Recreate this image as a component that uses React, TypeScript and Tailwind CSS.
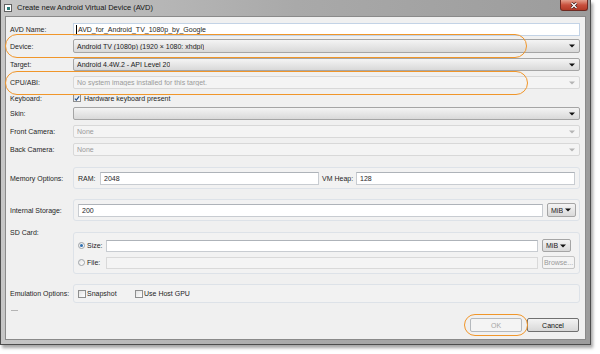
import type { ReactNode } from "react";

function Arrow({ disabled }: { disabled?: boolean }) {
	return (
		<svg width="6" height="4" viewBox="0 0 6 4" className="shrink-0">
			<path d="M0 0.5h6L3 3.5z" fill={disabled ? "#b4b4b4" : "#111"} />
		</svg>
	);
}

function Combo({
	text,
	disabled,
	className = "",
}: {
	text?: string;
	disabled?: boolean;
	className?: string;
}) {
	return (
		<div
			className={`flex items-center justify-between rounded-[2px] border pl-[3px] pr-[4px] ${
				disabled
					? "border-[#d8d8d8] bg-[#f4f4f4] text-[#9a9a9a]"
					: "border-[#a5a5a5] bg-gradient-to-b from-[#f4f4f4] to-[#d9d9d9] text-[#1a1a1a]"
			} ${className}`}
		>
			<span className="truncate">{text}</span>
			<Arrow disabled={disabled} />
		</div>
	);
}

function Input({
	value,
	disabled,
	className = "",
}: {
	value?: string;
	disabled?: boolean;
	className?: string;
}) {
	return (
		<div
			className={`flex items-center border pl-[3px] ${
				disabled
					? "border-[#d9d9d9] bg-[#f4f4f4]"
					: "border-[#c8ccd1] border-t-[#aeb3b9] bg-white"
			} ${className}`}
		>
			{value}
		</div>
	);
}

function Check({ checked }: { checked?: boolean }) {
	return (
		<span className="flex h-[8px] w-[8px] shrink-0 items-center justify-center border border-[#8e8f8f] bg-gradient-to-br from-[#e2e2e2] to-white">
			{checked ? (
				<svg width="7" height="7" viewBox="0 0 7 7">
					<path d="M1 3.6l1.7 1.8L6 1" stroke="#21508f" strokeWidth="1.4" fill="none" />
				</svg>
			) : null}
		</span>
	);
}

function Radio({ checked }: { checked?: boolean }) {
	return (
		<span className="flex h-[7px] w-[7px] shrink-0 items-center justify-center rounded-full border border-[#9ea3a8] bg-gradient-to-br from-[#e6e6e6] to-white">
			{checked ? <span className="h-[3px] w-[3px] rounded-full bg-[#2f6fb0]" /> : null}
		</span>
	);
}

function Row({
	label,
	className = "",
	children,
}: {
	label: string;
	className?: string;
	children: ReactNode;
}) {
	return (
		<div className={`grid grid-cols-[63px_1fr] items-center ${className}`}>
			<span>{label}</span>
			{children}
		</div>
	);
}

function Group({ className = "", children }: { className?: string; children: ReactNode }) {
	return (
		<div className={`rounded-[3px] border border-[#dde2e8] bg-[#f2f2f2] ${className}`}>
			{children}
		</div>
	);
}

export default function App() {
	return (
		<div className="h-[354px] w-[600px] bg-white font-['Liberation_Sans',Arial,sans-serif] text-[7px] leading-none text-[#1e1e1e]">
			<div className="relative flex h-[345px] w-[591px] flex-col border-x border-b border-[#4d4d4d] bg-gradient-to-r from-[#c6c6c6] via-[#a9a9a9] to-[#9c9c9c] shadow-[2px_3px_3px_rgba(0,0,0,0.35)]">
				<div className="flex h-[16px] items-start justify-between">
					<div className="flex items-center gap-[5px] pl-[3px] pt-[4px]">
						<span className="flex h-[8px] w-[8px] items-center justify-center border border-[#606060] bg-white">
							<span className="h-[3px] w-[3px] bg-[#2e7d7a]" />
						</span>
						<span className="text-[7.5px] text-[#151515]">Create new Android Virtual Device (AVD)</span>
					</div>
					<div className="mr-[2px] flex h-[11px] w-[28px] items-center justify-center rounded-b-[3px] border border-t-0 border-[#6e2a22] bg-gradient-to-b from-[#e3a08e] via-[#c8503d] to-[#b23a26]">
						<svg width="8" height="7" viewBox="0 0 8 7">
							<path d="M1.5 1l5 5M6.5 1l-5 5" stroke="#3a1510" strokeWidth="2.6" />
							<path d="M1.5 1l5 5M6.5 1l-5 5" stroke="#fff" strokeWidth="1.4" />
						</svg>
					</div>
				</div>

				<div className="relative mx-[4px] mb-[4px] flex flex-1 flex-col border border-[#8a8a8a] bg-[#f0f0f0] pl-[4px] pr-[5px] pt-[6px]">
					<Row label="AVD Name:">
						<div className="flex h-[13px] items-center border border-[#c3d3e6] bg-white pl-[2px]">
							<span className="mr-[1px] h-[9px] w-px bg-black" />
							AVD_for_Android_TV_1080p_by_Google
						</div>
					</Row>
					<Row label="Device:" className="mt-[3px]">
						<Combo className="h-[14px]" text="Android TV (1080p) (1920 × 1080: xhdpi)" />
					</Row>
					<Row label="Target:" className="mt-[5px]">
						<Combo className="h-[13px]" text="Android 4.4W.2 - API Level 20" />
					</Row>
					<Row label="CPU/ABI:" className="mt-[5px]">
						<Combo className="h-[13px]" disabled text="No system images installed for this target." />
					</Row>
					<Row label="Keyboard:" className="mt-[4px] h-[10px]">
						<div className="flex items-center gap-[3px]">
							<Check checked />
							<span>Hardware keyboard present</span>
						</div>
					</Row>
					<Row label="Skin:" className="mt-[4px]">
						<Combo className="h-[13px]" />
					</Row>
					<Row label="Front Camera:" className="mt-[5px]">
						<Combo className="h-[13px]" disabled text="None" />
					</Row>
					<Row label="Back Camera:" className="mt-[5px]">
						<Combo className="h-[13px]" disabled text="None" />
					</Row>

					<Row label="Memory Options:" className="mt-[11px]">
						<Group className="flex h-[22px] items-center pl-[4px] pr-[4px]">
							<span className="w-[22px]">RAM:</span>
							<Input className="h-[13px] w-[219px]" value="2048" />
							<span className="ml-[3px] w-[34px]">VM Heap:</span>
							<Input className="h-[13px] flex-1" value="128" />
						</Group>
					</Row>

					<Row label="Internal Storage:" className="mt-[10px]">
						<Group className="flex h-[22px] items-center gap-[4px] pl-[4px] pr-[3px]">
							<Input className="h-[13px] flex-1" value="200" />
							<Combo className="h-[14px] w-[29px]" text="MiB" />
						</Group>
					</Row>

					<div className="mt-[11px] grid grid-cols-[63px_1fr] items-start">
						<span className="-mt-[3px]">SD Card:</span>
						<Group className="flex h-[42px] flex-col gap-[4px] pl-[4px] pr-[4px] pt-[6px]">
							<div className="grid grid-cols-[28px_1fr_37px] items-center">
								<div className="flex items-center gap-[2px]">
									<Radio checked />
									<span>Size:</span>
								</div>
								<Input className="h-[12px]" />
								<Combo className="ml-[4px] h-[13px] w-[29px]" text="MiB" />
							</div>
							<div className="grid grid-cols-[28px_1fr_37px] items-center">
								<div className="flex items-center gap-[2px]">
									<Radio />
									<span>File:</span>
								</div>
								<Input className="h-[12px]" disabled />
								<div className="ml-[4px] flex h-[13px] items-center justify-center rounded-[2px] border border-[#c4c4c4] bg-[#f4f4f4] text-[#9a9a9a]">
									Browse...
								</div>
							</div>
						</Group>
					</div>

					<Row label="Emulation Options:" className="mt-[10px]">
						<Group className="flex h-[19px] items-center pl-[4px]">
							<div className="flex w-[57px] items-center gap-[1px]">
								<Check />
								<span>Snapshot</span>
							</div>
							<div className="flex items-center gap-[1px]">
								<Check />
								<span>Use Host GPU</span>
							</div>
						</Group>
					</Row>

					<div className="ml-[1px] mt-[7px] h-px w-[7px] bg-[#b4b4b4]" />

					<div className="mt-[7px] flex justify-end gap-[5px] pr-[1px]">
						<div className="flex h-[14px] w-[52px] items-center justify-center rounded-[2px] border border-[#b5b9bd] bg-[#f4f4f4] text-[#a5a5a5]">
							OK
						</div>
						<div className="flex h-[14px] w-[52px] items-center justify-center rounded-[2px] border border-[#707070] bg-gradient-to-b from-[#f3f3f3] to-[#d8d8d8] text-[#111]">
							Cancel
						</div>
					</div>

					{/* annotation ovals */}
					<div className="pointer-events-none absolute left-[-1px] top-[17px] h-[24px] w-[522px] rounded-full border-[1.5px] border-[#f0962a]" />
					<div className="pointer-events-none absolute left-[-1px] top-[54px] h-[24px] w-[523px] rounded-full border-[1.5px] border-[#f0962a]" />
					<div className="pointer-events-none absolute left-[458px] top-[297px] h-[22px] w-[64px] rounded-full border-[1.5px] border-[#f0962a]" />
				</div>
			</div>
		</div>
	);
}
